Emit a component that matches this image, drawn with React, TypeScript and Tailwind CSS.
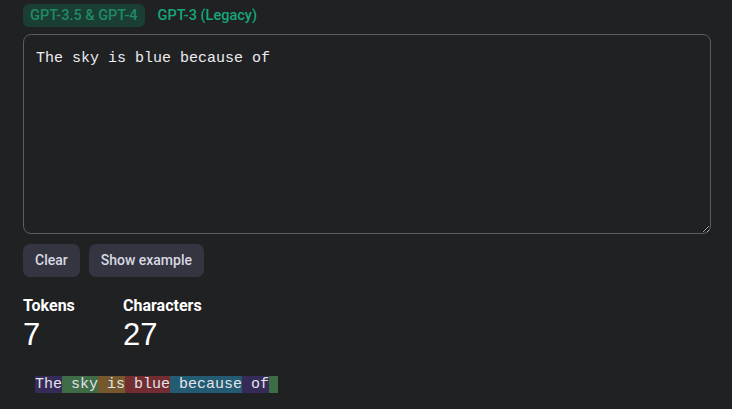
// Tokenizer view: model tabs, the input box, counters and the coloured token strip.

const TEXT = "The sky is blue because of ";

// One entry per token, tinted the way the tokenizer cycles its colours.
const TOKENS: { text: string; cls: string }[] = [
  { text: "The", cls: "bg-[rgba(107,64,216,0.3)]" },
  { text: " sky", cls: "bg-[rgba(104,222,122,0.4)]" },
  { text: " is", cls: "bg-[rgba(244,172,54,0.4)]" },
  { text: " blue", cls: "bg-[rgba(239,65,70,0.4)]" },
  { text: " because", cls: "bg-[rgba(39,181,234,0.4)]" },
  { text: " of", cls: "bg-[rgba(107,64,216,0.3)]" },
  { text: " ", cls: "bg-[rgba(104,222,122,0.4)]" },
];

export default function App() {
  return (
    <div className="min-h-[409px] w-[732px] bg-[#202123] pl-[23px] pr-[21px] pt-[4px] font-['Roboto',sans-serif] text-[#ececf1]">
      {/* Model tabs */}
      <div className="flex items-center gap-[6px]">
        <span className="h-[23px] rounded-[6px] bg-[#1b3e34] px-[7px] text-[14.5px] font-medium leading-[23px] text-[#1f8a66]">
          GPT-3.5 &amp; GPT-4
        </span>
        <span className="h-[23px] px-[7px] text-[14.5px] font-medium leading-[23px] text-[#17a57c]">
          GPT-3 (Legacy)
        </span>
      </div>

      {/* Input */}
      <textarea
        defaultValue={TEXT.trimEnd()}
        spellCheck={false}
        className="mt-[7px] block h-[200px] w-[688px] rounded-[8px] border border-[#5b5c66] bg-[#202123] px-[12px] py-[12px] font-['Liberation_Mono',monospace] text-[15px] leading-[24px] text-[#ececf1] outline-none"
      />

      {/* Actions */}
      <div className="mt-[10px] flex gap-[9px]">
        <button className="h-[33px] rounded-[7px] bg-[#343541] px-[12px] text-[14px] font-medium text-[#d9d9e3]">
          Clear
        </button>
        <button className="h-[33px] rounded-[7px] bg-[#343541] px-[12px] text-[14px] font-medium text-[#d9d9e3]">
          Show example
        </button>
      </div>

      {/* Counters */}
      <div className="mt-[18px] flex">
        <div className="w-[100px]">
          <div className="text-[16px] font-bold leading-[22px] text-white">Tokens</div>
          <div className="font-['Liberation_Sans',sans-serif] text-[31px] leading-[36px] text-white">7</div>
        </div>
        <div>
          <div className="text-[16px] font-bold leading-[22px] text-white">Characters</div>
          <div className="font-['Liberation_Sans',sans-serif] text-[31px] leading-[36px] text-white">27</div>
        </div>
      </div>

      {/* Token strip */}
      <div className="mt-[23px] px-[12px] font-['Liberation_Mono',monospace] text-[15px] leading-[18px] whitespace-pre text-[#e3e3ea]">
        {TOKENS.map((t, i) => (
          <span key={i} className={t.cls}>
            {t.text}
          </span>
        ))}
      </div>
    </div>
  );
}
